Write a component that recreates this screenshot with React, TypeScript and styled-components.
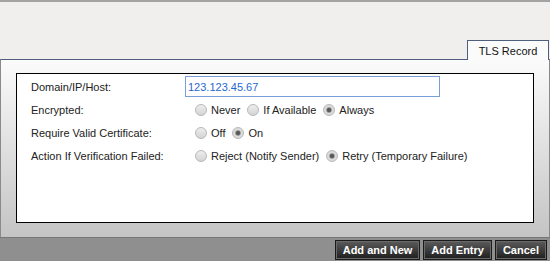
import React, { useState } from "react";
import styled, { createGlobalStyle } from "styled-components";

const Global = createGlobalStyle`
  html, body {
    margin: 0;
    padding: 0;
    background: #f0efed;
    font-family: "Liberation Sans", Arial, sans-serif;
  }
`;

const Page = styled.div`
  width: 550px;
  height: 261px;
  display: flex;
  flex-direction: column;
  border-top: 2px solid #a3a3a3;
  box-sizing: border-box;
  overflow: hidden;
`;

const TabStrip = styled.div`
  height: 57px;
  display: flex;
  justify-content: flex-end;
  align-items: flex-end;
  padding-right: 1px;
`;

const Tab = styled.div`
  width: 80px;
  height: 19px;
  border: 1px solid #4f5f7d;
  border-bottom: none;
  background: #fbfbfb;
  font-size: 11px;
  color: #111;
  display: flex;
  align-items: center;
  justify-content: center;
  margin-bottom: -1px;
  position: relative;
`;

const Panel = styled.div`
  height: 178px;
  box-sizing: border-box;
  border-top: 1px solid #4f5f7d;
  border-left: 1px solid #8a8a8a;
  border-right: 1px solid #8a8a8a;
  background: linear-gradient(#fbfbfb, #c4c4c4);
  padding: 13px 15px 14px 15px;
`;

const Box = styled.div`
  height: 100%;
  box-sizing: border-box;
  border: 1px solid #000;
  background: #fff;
  padding: 1px 0 0 14px;
`;

const Row = styled.div`
  display: grid;
  grid-template-columns: 154px 1fr;
  align-items: center;
  height: 23px;
  font-size: 11px;
  color: #222;
`;

const Label = styled.div`
  white-space: nowrap;
`;

const TextInput = styled.input`
  width: 255px;
  height: 21px;
  box-sizing: border-box;
  border: 1px solid #7a9fd6;
  padding: 0 2px;
  font-family: inherit;
  font-size: 11px;
  color: #1f68d0;
  outline: none;
`;

const Options = styled.div`
  display: flex;
  align-items: center;
  padding-left: 10px;
`;

const Option = styled.label`
  display: flex;
  align-items: center;
  gap: 4px;
  margin-right: 7px;
  cursor: pointer;
`;

const Dot = styled.span<{ $on: boolean }>`
  width: 12px;
  height: 12px;
  box-sizing: border-box;
  border-radius: 50%;
  border: 1px solid #b8b8b8;
  background: ${(p) =>
    p.$on
      ? "radial-gradient(circle, #5a5a5a 0 1.8px, #a8a8a8 2.6px, #dcdcdc 3.4px, #d4d4d4 100%)"
      : "linear-gradient(#ededed, #d4d4d4)"};
`;

const Footer = styled.div`
  flex: 1;
  background: #8f8f8f;
  border-top: 1px solid #777;
  display: flex;
  justify-content: flex-end;
  align-items: center;
  gap: 3px;
  padding: 1px 3px 0 0;
`;

const Button = styled.button`
  height: 20px;
  padding: 0 7px;
  border: 1px solid #1a1a1a;
  box-shadow: inset 0 0 0 1px #6a6a6a;
  background: linear-gradient(#5c5c5c, #1e1e1e);
  color: #fff;
  font-family: inherit;
  font-weight: bold;
  font-size: 11px;
  cursor: pointer;
`;

type Choice = { label: string; options: string[] };

const choices: Choice[] = [
  { label: "Encrypted:", options: ["Never", "If Available", "Always"] },
  { label: "Require Valid Certificate:", options: ["Off", "On"] },
  {
    label: "Action If Verification Failed:",
    options: ["Reject (Notify Sender)", "Retry (Temporary Failure)"],
  },
];

const App = () => {
  const [host, setHost] = useState("123.123.45.67");
  const [picked, setPicked] = useState<string[]>([
    "Always",
    "On",
    "Retry (Temporary Failure)",
  ]);

  const pick = (i: number, value: string) => {
    const next = [...picked];
    next[i] = value;
    setPicked(next);
  };

  return (
    <Page>
      <Global />
      <TabStrip>
        <Tab>TLS Record</Tab>
      </TabStrip>
      <Panel>
        <Box>
          <Row>
            <Label>Domain/IP/Host:</Label>
            <TextInput value={host} onChange={(e) => setHost(e.target.value)} />
          </Row>
          {choices.map((c, i) => (
            <Row key={c.label}>
              <Label>{c.label}</Label>
              <Options>
                {c.options.map((o) => (
                  <Option key={o} onClick={() => pick(i, o)}>
                    <Dot $on={picked[i] === o} />
                    {o}
                  </Option>
                ))}
              </Options>
            </Row>
          ))}
        </Box>
      </Panel>
      <Footer>
        <Button>Add and New</Button>
        <Button>Add Entry</Button>
        <Button>Cancel</Button>
      </Footer>
    </Page>
  );
};

export default App;
